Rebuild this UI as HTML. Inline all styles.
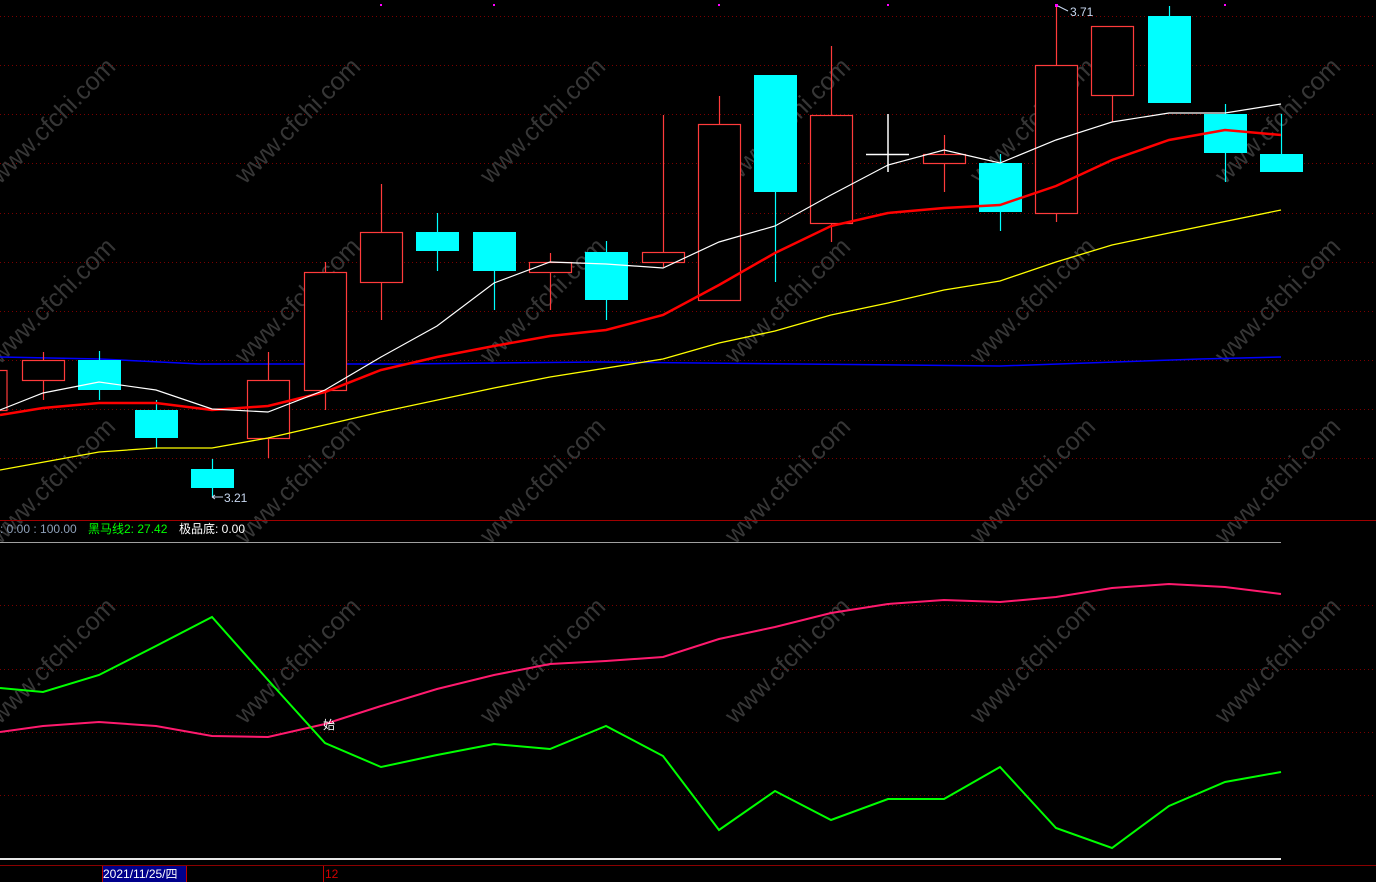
<!DOCTYPE html>
<html><head><meta charset="utf-8"><style>
html,body{margin:0;padding:0;background:#000;width:1376px;height:882px;overflow:hidden}
svg{display:block}
text{font-family:"Liberation Sans","Noto Sans CJK SC",sans-serif}
</style></head><body>
<svg width="1376" height="882" viewBox="0 0 1376 882" xmlns="http://www.w3.org/2000/svg">
<g stroke="#7a0000" stroke-width="1" stroke-dasharray="1,3">
<line x1="0" y1="16.5" x2="1376" y2="16.5"/><line x1="0" y1="65.5" x2="1376" y2="65.5"/>
<line x1="0" y1="114.5" x2="1376" y2="114.5"/><line x1="0" y1="163.5" x2="1376" y2="163.5"/>
<line x1="0" y1="213.5" x2="1376" y2="213.5"/><line x1="0" y1="262.5" x2="1376" y2="262.5"/>
<line x1="0" y1="311.5" x2="1376" y2="311.5"/><line x1="0" y1="360.5" x2="1376" y2="360.5"/>
<line x1="0" y1="409.5" x2="1376" y2="409.5"/><line x1="0" y1="458.5" x2="1376" y2="458.5"/>
<line x1="0" y1="605.5" x2="1376" y2="605.5"/><line x1="0" y1="669.5" x2="1376" y2="669.5"/>
<line x1="0" y1="732.5" x2="1376" y2="732.5"/><line x1="0" y1="795.5" x2="1376" y2="795.5"/>
</g>
<g font-size="25" fill="#363636">
<text transform="translate(0,185) rotate(-45)">www.cfchi.com</text>
<text transform="translate(245,185) rotate(-45)">www.cfchi.com</text>
<text transform="translate(490,185) rotate(-45)">www.cfchi.com</text>
<text transform="translate(735,185) rotate(-45)">www.cfchi.com</text>
<text transform="translate(980,185) rotate(-45)">www.cfchi.com</text>
<text transform="translate(1225,185) rotate(-45)">www.cfchi.com</text>
<text transform="translate(0,365) rotate(-45)">www.cfchi.com</text>
<text transform="translate(245,365) rotate(-45)">www.cfchi.com</text>
<text transform="translate(490,365) rotate(-45)">www.cfchi.com</text>
<text transform="translate(735,365) rotate(-45)">www.cfchi.com</text>
<text transform="translate(980,365) rotate(-45)">www.cfchi.com</text>
<text transform="translate(1225,365) rotate(-45)">www.cfchi.com</text>
<text transform="translate(0,545) rotate(-45)">www.cfchi.com</text>
<text transform="translate(245,545) rotate(-45)">www.cfchi.com</text>
<text transform="translate(490,545) rotate(-45)">www.cfchi.com</text>
<text transform="translate(735,545) rotate(-45)">www.cfchi.com</text>
<text transform="translate(980,545) rotate(-45)">www.cfchi.com</text>
<text transform="translate(1225,545) rotate(-45)">www.cfchi.com</text>
<text transform="translate(0,725) rotate(-45)">www.cfchi.com</text>
<text transform="translate(245,725) rotate(-45)">www.cfchi.com</text>
<text transform="translate(490,725) rotate(-45)">www.cfchi.com</text>
<text transform="translate(735,725) rotate(-45)">www.cfchi.com</text>
<text transform="translate(980,725) rotate(-45)">www.cfchi.com</text>
<text transform="translate(1225,725) rotate(-45)">www.cfchi.com</text>
</g>
<polyline fill="none" stroke="#0000ff" stroke-width="1.5" points="0,357 100,359 200,364 400,364 600,362 800,364 1000,366 1200,359 1281,357"/>
<g stroke="#ff3b3b" stroke-width="1.2" fill="#000">
<line x1="43.5" y1="352" x2="43.5" y2="400"/><rect x="22.5" y="360.5" width="42" height="20"/>
<rect x="-10" y="370.5" width="17" height="40"/>
<line x1="268.5" y1="352" x2="268.5" y2="458"/><rect x="247.5" y="380.5" width="42" height="58"/>
<line x1="325.5" y1="262" x2="325.5" y2="410"/><rect x="304.5" y="272.5" width="42" height="118"/>
<line x1="381.5" y1="184" x2="381.5" y2="320"/><rect x="360.5" y="232.5" width="42" height="50"/>
<line x1="550.5" y1="253" x2="550.5" y2="310"/><rect x="529.5" y="262.5" width="42" height="10"/>
<line x1="663.5" y1="115" x2="663.5" y2="267"/><rect x="642.5" y="252.5" width="42" height="10"/>
<line x1="719.5" y1="96" x2="719.5" y2="300"/><rect x="698.5" y="124.5" width="42" height="176"/>
<line x1="831.5" y1="46" x2="831.5" y2="242"/><rect x="810.5" y="115.5" width="42" height="108"/>
<line x1="944.5" y1="135" x2="944.5" y2="192"/><rect x="923.5" y="154.5" width="42" height="9"/>
<line x1="1056.5" y1="5" x2="1056.5" y2="222"/><rect x="1035.5" y="65.5" width="42" height="148"/>
<line x1="1112.5" y1="26" x2="1112.5" y2="122"/><rect x="1091.5" y="26.5" width="42" height="69"/>
</g>
<g stroke="#00ffff" stroke-width="1.2">
<line x1="99.5" y1="351" x2="99.5" y2="400"/><line x1="156.5" y1="400" x2="156.5" y2="448"/>
<line x1="212.5" y1="459" x2="212.5" y2="497"/><line x1="437.5" y1="213" x2="437.5" y2="271"/>
<line x1="494.5" y1="232" x2="494.5" y2="310"/><line x1="606.5" y1="241" x2="606.5" y2="320"/>
<line x1="775.5" y1="75" x2="775.5" y2="282"/><line x1="1000.5" y1="154" x2="1000.5" y2="231"/>
<line x1="1169.5" y1="6" x2="1169.5" y2="103"/><line x1="1225.5" y1="104" x2="1225.5" y2="182"/>
<line x1="1281.5" y1="114" x2="1281.5" y2="172"/>
</g>
<g fill="#00ffff">
<rect x="78" y="360" width="43" height="30"/><rect x="135" y="410" width="43" height="28"/>
<rect x="191" y="469" width="43" height="19"/><rect x="416" y="232" width="43" height="19"/>
<rect x="473" y="232" width="43" height="39"/><rect x="585" y="252" width="43" height="48"/>
<rect x="754" y="75" width="43" height="117"/><rect x="979" y="163" width="43" height="49"/>
<rect x="1148" y="16" width="43" height="87"/><rect x="1204" y="114" width="43" height="39"/>
<rect x="1260" y="154" width="43" height="18"/>
</g>
<g stroke="#fff" stroke-width="1.5"><line x1="888" y1="114" x2="888" y2="172"/><line x1="866" y1="154.5" x2="909" y2="154.5"/></g>
<polyline fill="none" stroke="#ffff00" stroke-width="1.3" points="0,470 99,452 156,448 212,448 268,438 381,412 494,388 550,377 663,359 719,343 775,331 831,315 888,303 944,290 1000,281 1056,262 1112,245 1169,233 1281,210"/>
<polyline fill="none" stroke="#ff0000" stroke-width="2.5" points="0,415 43,408 99,403 156,403 212,410 268,406 325,392 381,370 437,357 494,346 550,336 606,330 663,315 719,285 775,253 831,226 888,213 944,208 1000,205 1056,186 1112,160 1169,140 1225,130 1281,135"/>
<polyline fill="none" stroke="#ffffff" stroke-width="1.2" points="0,410 43,393 99,382 156,390 212,409 268,412 325,390 381,357 437,326 494,283 550,262 606,264 663,268 719,242 775,226 831,195 888,165 944,150 1000,163 1056,140 1112,122 1169,113 1225,113 1281,104"/>
<g fill="#ff00ff"><rect x="380" y="4" width="2" height="2"/><rect x="493" y="4" width="2" height="2"/><rect x="718" y="4" width="2" height="2"/><rect x="887" y="4" width="2" height="2"/><rect x="1224" y="4" width="2" height="2"/><rect x="1055" y="4" width="3" height="3"/></g>
<g font-size="12" fill="#c8d8f0">
<text x="1070" y="16">3.71</text><text x="224" y="502">3.21</text></g>
<g stroke="#c8d8f0" fill="none"><path d="M1058 6 L1068 11"/><path d="M212 497 L223 497 M212 497 l3 -2 M212 497 l3 2"/></g>
<line x1="0" y1="520.5" x2="1376" y2="520.5" stroke="#a00000"/>
<line x1="0" y1="542.5" x2="1281" y2="542.5" stroke="#a0a0a0"/>
<line x1="0" y1="859" x2="1281" y2="859" stroke="#e8e8e8" stroke-width="2"/>
<line x1="0" y1="865.5" x2="1376" y2="865.5" stroke="#8a0000"/>
<text x="0" y="533" font-size="12" fill="#8ea0b8">: 0.00 : 100.00</text>
<text x="88" y="533" font-size="12" fill="#00ff00">黑马线2: 27.42</text>
<text x="179" y="533" font-size="12" fill="#ffffff">极品底: 0.00</text>
<polyline fill="none" stroke="#ff1a6e" stroke-width="2" points="0,732 43,726 99,722 156,726 212,736 268,737 325,724 381,706 437,689 494,675 550,664 606,661 663,657 719,639 775,627 831,613 888,604 944,600 1000,602 1056,597 1112,588 1169,584 1225,587 1281,594"/>
<polyline fill="none" stroke="#00ff00" stroke-width="2" points="0,688 43,692 99,675 156,646 212,617 268,680 325,743 381,767 437,755 494,744 550,749 606,726 663,756 719,830 775,791 831,820 888,799 944,799 1000,767 1056,828 1112,848 1169,806 1225,782 1281,772"/>
<text x="323" y="729" font-size="12" fill="#ffffff">始</text>
<rect x="102" y="866" width="84" height="16" fill="#00008b"/>
<line x1="102.5" y1="866" x2="102.5" y2="882" stroke="#c00000"/><line x1="186.5" y1="866" x2="186.5" y2="882" stroke="#c00000"/>
<line x1="323.5" y1="866" x2="323.5" y2="882" stroke="#c00000"/>
<text x="103" y="878" font-size="12" fill="#ffffff">2021/11/25/四</text>
<text x="325" y="878" font-size="12" fill="#d00000">12</text>
</svg>
</body></html>
